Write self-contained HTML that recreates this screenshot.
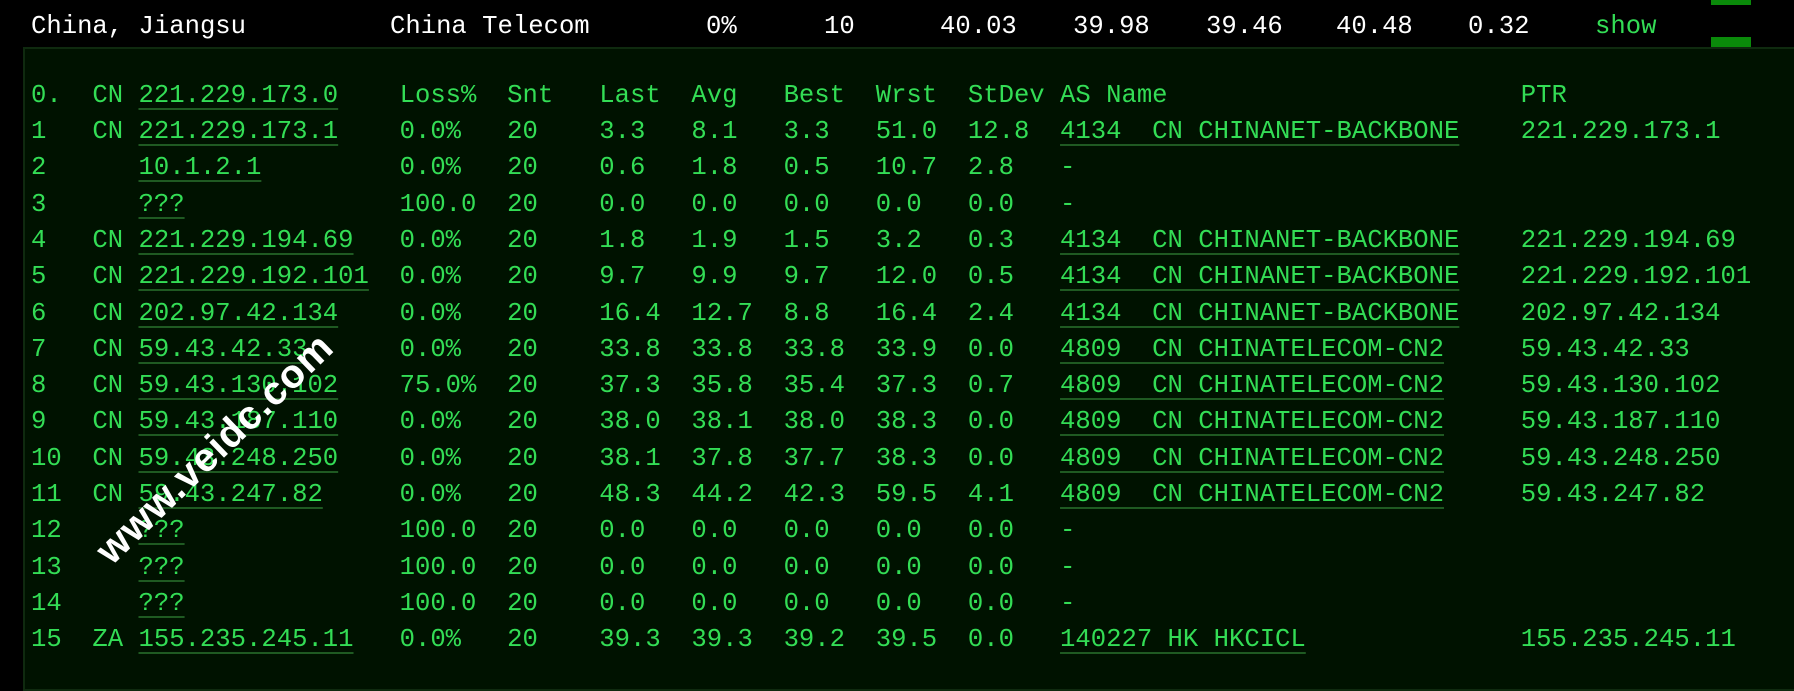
<!DOCTYPE html>
<html><head><meta charset="utf-8"><style>
*{margin:0;padding:0}
body{width:1794px;height:680px;background:#000;position:relative;overflow:hidden;font-family:"Liberation Mono",monospace;font-size:25.6px}
.top{position:absolute;left:31px;top:12px;height:34px;color:#fff;width:1700px}
.top span{position:absolute;top:0;white-space:pre}
.bar{position:absolute;left:1711px;width:40px;background:#0a8a0a}
.panel{position:absolute;left:23px;top:47px;width:1780px;height:640px;background:#001200;border:2px solid #0f2a0f}
.r{position:absolute;left:31px;height:36px;line-height:36px;color:#33dd55;width:1760px}
.r i{position:absolute;top:0;font-style:normal;white-space:pre}
.u{text-decoration:underline;text-decoration-color:#1f5a22;text-decoration-thickness:2px;text-underline-offset:6px}
.c0{left:0}.c1{left:4ch}.c2{left:7ch}.c3{left:24ch}.c4{left:31ch}.c5{left:37ch}.c6{left:43ch}.c7{left:49ch}.c8{left:55ch}.c9{left:61ch}.c10{left:67ch}.c11{left:97ch}
.wm{position:absolute;left:215px;top:449px;transform:translate(-50%,-50%) rotate(-44deg);color:#fff;font-family:"Liberation Sans",sans-serif;font-weight:bold;font-size:40px;white-space:nowrap;letter-spacing:1px}
</style></head><body>
<div class="bar" style="top:0;height:5px"></div>
<div class="bar" style="top:37px;height:10px"></div>
<div class="top">
<span style="left:0">China, Jiangsu</span>
<span style="left:359px">China Telecom</span>
<span style="left:675px">0%</span>
<span style="left:793px">10</span>
<span style="left:909px">40.03</span>
<span style="left:1042px">39.98</span>
<span style="left:1175px">39.46</span>
<span style="left:1305px">40.48</span>
<span style="left:1437px">0.32</span>
<span style="left:1564px;color:#33dd55">show</span>
</div>
<div class="panel"></div>

<div class="r" style="top:78px"><i class="c0">0.</i><i class="c1">CN</i><i class="c2 u">221.229.173.0</i><i class="c3">Loss%</i><i class="c4">Snt</i><i class="c5">Last</i><i class="c6">Avg</i><i class="c7">Best</i><i class="c8">Wrst</i><i class="c9">StDev</i><i class="c10">AS Name</i><i class="c11">PTR</i></div>
<div class="r" style="top:114px"><i class="c0">1</i><i class="c1">CN</i><i class="c2 u">221.229.173.1</i><i class="c3">0.0%</i><i class="c4">20</i><i class="c5">3.3</i><i class="c6">8.1</i><i class="c7">3.3</i><i class="c8">51.0</i><i class="c9">12.8</i><i class="c10 u">4134  CN CHINANET-BACKBONE</i><i class="c11">221.229.173.1</i></div>
<div class="r" style="top:150px"><i class="c0">2</i><i class="c2 u">10.1.2.1</i><i class="c3">0.0%</i><i class="c4">20</i><i class="c5">0.6</i><i class="c6">1.8</i><i class="c7">0.5</i><i class="c8">10.7</i><i class="c9">2.8</i><i class="c10">-</i></div>
<div class="r" style="top:187px"><i class="c0">3</i><i class="c2 u">???</i><i class="c3">100.0</i><i class="c4">20</i><i class="c5">0.0</i><i class="c6">0.0</i><i class="c7">0.0</i><i class="c8">0.0</i><i class="c9">0.0</i><i class="c10">-</i></div>
<div class="r" style="top:223px"><i class="c0">4</i><i class="c1">CN</i><i class="c2 u">221.229.194.69</i><i class="c3">0.0%</i><i class="c4">20</i><i class="c5">1.8</i><i class="c6">1.9</i><i class="c7">1.5</i><i class="c8">3.2</i><i class="c9">0.3</i><i class="c10 u">4134  CN CHINANET-BACKBONE</i><i class="c11">221.229.194.69</i></div>
<div class="r" style="top:259px"><i class="c0">5</i><i class="c1">CN</i><i class="c2 u">221.229.192.101</i><i class="c3">0.0%</i><i class="c4">20</i><i class="c5">9.7</i><i class="c6">9.9</i><i class="c7">9.7</i><i class="c8">12.0</i><i class="c9">0.5</i><i class="c10 u">4134  CN CHINANET-BACKBONE</i><i class="c11">221.229.192.101</i></div>
<div class="r" style="top:296px"><i class="c0">6</i><i class="c1">CN</i><i class="c2 u">202.97.42.134</i><i class="c3">0.0%</i><i class="c4">20</i><i class="c5">16.4</i><i class="c6">12.7</i><i class="c7">8.8</i><i class="c8">16.4</i><i class="c9">2.4</i><i class="c10 u">4134  CN CHINANET-BACKBONE</i><i class="c11">202.97.42.134</i></div>
<div class="r" style="top:332px"><i class="c0">7</i><i class="c1">CN</i><i class="c2 u">59.43.42.33</i><i class="c3">0.0%</i><i class="c4">20</i><i class="c5">33.8</i><i class="c6">33.8</i><i class="c7">33.8</i><i class="c8">33.9</i><i class="c9">0.0</i><i class="c10 u">4809  CN CHINATELECOM-CN2</i><i class="c11">59.43.42.33</i></div>
<div class="r" style="top:368px"><i class="c0">8</i><i class="c1">CN</i><i class="c2 u">59.43.130.102</i><i class="c3">75.0%</i><i class="c4">20</i><i class="c5">37.3</i><i class="c6">35.8</i><i class="c7">35.4</i><i class="c8">37.3</i><i class="c9">0.7</i><i class="c10 u">4809  CN CHINATELECOM-CN2</i><i class="c11">59.43.130.102</i></div>
<div class="r" style="top:404px"><i class="c0">9</i><i class="c1">CN</i><i class="c2 u">59.43.187.110</i><i class="c3">0.0%</i><i class="c4">20</i><i class="c5">38.0</i><i class="c6">38.1</i><i class="c7">38.0</i><i class="c8">38.3</i><i class="c9">0.0</i><i class="c10 u">4809  CN CHINATELECOM-CN2</i><i class="c11">59.43.187.110</i></div>
<div class="r" style="top:441px"><i class="c0">10</i><i class="c1">CN</i><i class="c2 u">59.43.248.250</i><i class="c3">0.0%</i><i class="c4">20</i><i class="c5">38.1</i><i class="c6">37.8</i><i class="c7">37.7</i><i class="c8">38.3</i><i class="c9">0.0</i><i class="c10 u">4809  CN CHINATELECOM-CN2</i><i class="c11">59.43.248.250</i></div>
<div class="r" style="top:477px"><i class="c0">11</i><i class="c1">CN</i><i class="c2 u">59.43.247.82</i><i class="c3">0.0%</i><i class="c4">20</i><i class="c5">48.3</i><i class="c6">44.2</i><i class="c7">42.3</i><i class="c8">59.5</i><i class="c9">4.1</i><i class="c10 u">4809  CN CHINATELECOM-CN2</i><i class="c11">59.43.247.82</i></div>
<div class="r" style="top:513px"><i class="c0">12</i><i class="c2 u">???</i><i class="c3">100.0</i><i class="c4">20</i><i class="c5">0.0</i><i class="c6">0.0</i><i class="c7">0.0</i><i class="c8">0.0</i><i class="c9">0.0</i><i class="c10">-</i></div>
<div class="r" style="top:550px"><i class="c0">13</i><i class="c2 u">???</i><i class="c3">100.0</i><i class="c4">20</i><i class="c5">0.0</i><i class="c6">0.0</i><i class="c7">0.0</i><i class="c8">0.0</i><i class="c9">0.0</i><i class="c10">-</i></div>
<div class="r" style="top:586px"><i class="c0">14</i><i class="c2 u">???</i><i class="c3">100.0</i><i class="c4">20</i><i class="c5">0.0</i><i class="c6">0.0</i><i class="c7">0.0</i><i class="c8">0.0</i><i class="c9">0.0</i><i class="c10">-</i></div>
<div class="r" style="top:622px"><i class="c0">15</i><i class="c1">ZA</i><i class="c2 u">155.235.245.11</i><i class="c3">0.0%</i><i class="c4">20</i><i class="c5">39.3</i><i class="c6">39.3</i><i class="c7">39.2</i><i class="c8">39.5</i><i class="c9">0.0</i><i class="c10 u">140227 HK HKCICL</i><i class="c11">155.235.245.11</i></div>

<div class="wm">www.veidc.com</div>
</body></html>
